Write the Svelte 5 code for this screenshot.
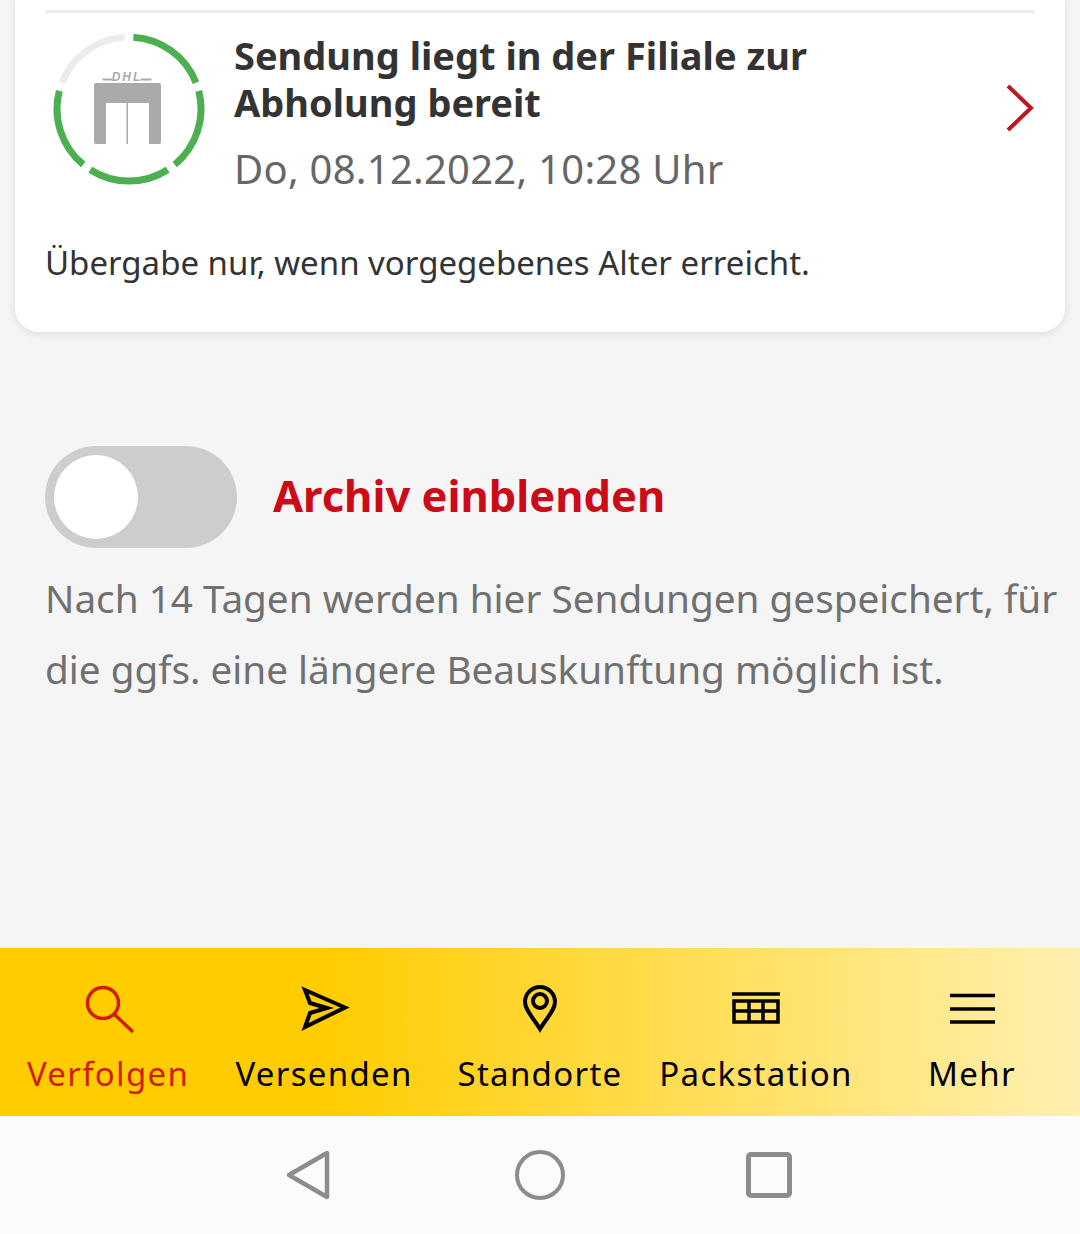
<script>
  const tabs = [
    { label: "Verfolgen", icon: "search", active: true },
    { label: "Versenden", icon: "send" },
    { label: "Standorte", icon: "pin" },
    { label: "Packstation", icon: "locker" },
    { label: "Mehr", icon: "menu" },
  ];
</script>

<div class="screen">
  <main class="content">
    <section class="card">
      <div class="rule"></div>
      <div class="status">
        <svg class="ring" width="156" height="156" viewBox="0 0 156 156">
          <g fill="none" stroke-width="7" transform="rotate(-90 78 78)">
            {#each [0, 1, 2, 3, 4] as i}
              <circle
                cx="78"
                cy="78"
                r="72"
                pathLength="360"
                stroke={i === 4 ? "#ececec" : "#4caf50"}
                stroke-dasharray="65 295"
                transform="rotate({3.5 + i * 72} 78 78)"
              />
            {/each}
          </g>
          <path fill="#aaa" d="M51 47.500h11l-1 2H52zM90 47.500h11l-1 2H89z" />
          <text class="dhl" x="76" y="49.500" text-anchor="middle">DHL</text>
          <path
            fill="#aaa"
            d="M43 54a2 2 0 0 1 2-2h63a2 2 0 0 1 2 2v57a2 2 0 0 1-2 2H98V72H55v41H45a2 2 0 0 1-2-2z"
          />
          <rect x="75.500" y="72" width="1.500" height="41" fill="#aaa" />
        </svg>
        <div class="text">
          <h2>Sendung liegt in der Filiale zur Abholung bereit</h2>
          <p class="date">Do, 08.12.2022, 10:28 Uhr</p>
        </div>
        <svg class="chevron" width="30" height="48" viewBox="0 0 30 48">
          <path d="M3 2l23 22L3 46" fill="none" stroke="#c0141f" stroke-width="4" />
        </svg>
      </div>
      <p class="note">Übergabe nur, wenn vorgegebenes Alter erreicht.</p>
    </section>

    <section class="archive">
      <div class="toggle-row">
        <div class="toggle"><div class="knob"></div></div>
        <span class="toggle-label">Archiv einblenden</span>
      </div>
      <p class="hint">Nach 14 Tagen werden hier Sendungen gespeichert, für die ggfs. eine längere Beauskunftung möglich ist.</p>
    </section>
  </main>

  <nav class="tabs">
    {#each tabs as tab}
      <div class="tab" class:active={tab.active}>
        <svg width="52" height="52" viewBox="0 0 52 52" fill="none" stroke="currentColor" stroke-width="3.500">
          {#if tab.icon === "search"}
            <circle cx="21" cy="21" r="15.500" />
            <path d="M32 32l19 18" />
          {:else if tab.icon === "send"}
            <path d="M7 8l40 17.500L7 45l5-14 17-5-17-5z" stroke-width="4" />
          {:else if tab.icon === "pin"}
            <path d="M26 47C20 37 11 28 11 20a15 15 0 0 1 30 0c0 8-9 17-15 27z" stroke-width="4" />
            <circle cx="26" cy="19" r="7" stroke-width="4" />
          {:else if tab.icon === "locker"}
            <path d="M2 12h48M4 19h44v21H4zM4 29h44M19 19v21M33 19v21" />
          {:else}
            <path d="M4 13.500h45M4 27h45M4 40h45" />
          {/if}
        </svg>
        <span>{tab.label}</span>
      </div>
    {/each}
  </nav>

  <div class="sysbar">
    <svg width="46" height="52" viewBox="0 0 46 52">
      <path d="M42 4v44L4 26z" fill="none" stroke="#8c8c8c" stroke-width="4.500" stroke-linejoin="round" />
    </svg>
    <div class="home"></div>
    <div class="recent"></div>
  </div>
</div>

<style>
  :global(body) {
    background: #f5f5f5;
  }
  .screen {
    display: flex;
    flex-direction: column;
    width: 1080px;
    height: 1234px;
    overflow: hidden;
    background: #f5f5f5;
    font-family: "Noto Sans", sans-serif;
  }
  .content {
    flex: 1;
  }
  .card {
    margin: 0 15px;
    padding: 10px 30px 0;
    height: 322px;
    background: #fff;
    border-radius: 0 0 24px 24px;
    box-shadow: 0 2px 10px rgba(0, 0, 0, 0.1);
  }
  .rule {
    height: 3px;
    background: #ececec;
  }
  .status {
    display: flex;
    align-items: flex-start;
    padding-top: 18px;
  }
  .ring {
    margin-left: 6px;
    flex: none;
  }
  .dhl {
    font-family: "Liberation Sans", sans-serif;
    font-size: 12px;
    font-weight: 700;
    font-style: italic;
    letter-spacing: 2px;
    fill: #aaa;
  }
  .text {
    flex: 1;
    margin-left: 27px;
    padding-top: 1px;
  }
  h2 {
    margin: 0;
    width: 640px;
    font-size: 38px;
    line-height: 47px;
    font-weight: 700;
    color: #333;
  }
  .date {
    margin: 18px 0 0;
    font-size: 40px;
    line-height: 50px;
    letter-spacing: 0.25px;
    color: #666;
  }
  .chevron {
    flex: none;
    margin-top: 53px;
  }
  .note {
    margin: 47px 0 0;
    font-size: 33px;
    line-height: 44px;
    color: #333;
  }
  .archive {
    padding: 114px 10px 0 45px;
  }
  .toggle-row {
    display: flex;
    align-items: center;
  }
  .toggle {
    width: 192px;
    height: 102px;
    padding: 9px;
    box-sizing: border-box;
    border-radius: 51px;
    background: #cdcdcd;
  }
  .knob {
    width: 84px;
    height: 84px;
    border-radius: 50%;
    background: #fff;
  }
  .toggle-label {
    position: relative;
    top: -2px;
    margin-left: 36px;
    font-size: 43.500px;
    font-weight: 700;
    color: #cc0a18;
  }
  .hint {
    margin: 15px 0 0;
    font-size: 38.700px;
    line-height: 71px;
    color: #707070;
  }
  .tabs {
    display: grid;
    grid-template-columns: repeat(5, 216px);
    height: 168px;
    background: linear-gradient(90deg, #ffcc00 0%, #ffcc00 30%, #fff0b0 100%);
  }
  .tab {
    display: flex;
    flex-direction: column;
    align-items: center;
    padding-top: 34px;
    color: #000;
    font-size: 33px;
    letter-spacing: 1.3px;
  }
  .tab span {
    margin-top: 18px;
    line-height: 44px;
    white-space: nowrap;
  }
  .tab.active {
    color: #cf1f00;
  }
  .sysbar {
    display: flex;
    align-items: center;
    justify-content: center;
    gap: 184px;
    height: 118px;
    padding-right: 3px;
    background: #fbfbfb;
  }
  .home {
    box-sizing: border-box;
    width: 50px;
    height: 50px;
    border: 4px solid #8c8c8c;
    border-radius: 50%;
  }
  .recent {
    box-sizing: border-box;
    width: 46px;
    height: 46px;
    margin-left: -3px;
    border: 5px solid #8c8c8c;
    border-radius: 5px;
  }
</style>
